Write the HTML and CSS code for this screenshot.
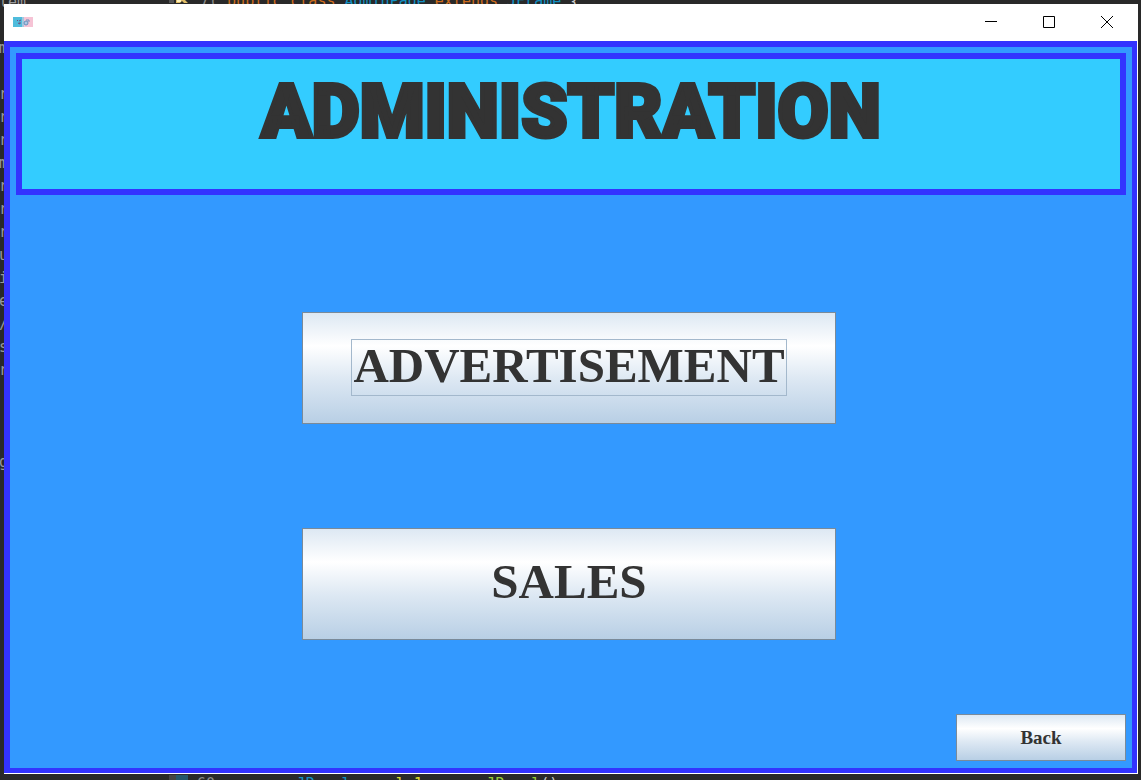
FILE: index.html
```
<!DOCTYPE html>
<html lang="en">
<head>
<meta charset="utf-8">
<title>Administration</title>
<link rel="stylesheet" href="styles.css">
</head>
<body>
<div class="editor">
  <pre class="tree"> lem

 m

 r
 r
 r
 m
 r
 re
 r
 u
 i
 e
 /
 s
 re



 g</pre>
  <pre class="code code-top"><span class="num">7(</span> <span class="kw">public</span> <span class="kw">class</span> <span class="type">AdminPage</span> <span class="kw">extends</span> <span class="type">JFrame</span> {</pre>
  <svg class="marker" width="20" height="4" viewBox="0 0 20 4" aria-hidden="true"><path fill="#555" d="M0 0h5v3H0z"/><path fill="#e0bd66" d="M7 0h9l3 3h-4l-2-2-2 2H7z"/><path fill="#fff0bb" d="M8 0h4v2H8z"/></svg>
  <div class="gutter"></div>
  <pre class="code code-bottom"><span class="num">60</span>         <span class="type">JPanel</span> <span class="var">panel_1</span> = <span class="kw">new</span> <span class="ctor">JPanel</span>();</pre>
</div>
<div class="window">
  <div class="titlebar">
    <svg class="logo" width="20" height="10" viewBox="0 0 20 10" aria-hidden="true">
      <rect width="10" height="10" fill="#4fbcdc"/><rect x="10" width="10" height="10" fill="#f6c3d5"/>
      <rect x="9" width="2" height="10" fill="#a5c8df"/>
      <path d="M4 3l1 1M6 4l2-1M5 6l2 1M7 5v2" stroke="#71507f" fill="none"/>
      <circle cx="13" cy="6" r="2" fill="#adc9e6" stroke="#678fbb"/><path d="M13 3h3v2" stroke="#678fbb" fill="none"/>
    </svg>
    <div class="controls">
      <button type="button" aria-label="Minimize"><svg width="12" height="12" viewBox="0 0 12 12"><path d="M0 5.5h12"/></svg></button>
      <button type="button" aria-label="Maximize"><svg width="12" height="12" viewBox="0 0 12 12"><path d="M.5.5h11v11H.5z"/></svg></button>
      <button type="button" aria-label="Close"><svg width="12" height="12" viewBox="0 0 12 12"><path d="M0 0l12 12M12 0L0 12"/></svg></button>
    </div>
  </div>
  <main class="content">
    <header class="banner"><h1>ADMINISTRATION</h1></header>
    <nav class="menu">
      <button type="button" class="metal large"><span class="focus">ADVERTISEMENT</span></button>
      <button type="button" class="metal large"><span>SALES</span></button>
    </nav>
    <footer class="footer"><button type="button" class="metal back">Back</button></footer>
  </main>
</div>
</body>
</html>
```
FILE: styles.css
```
* { box-sizing: border-box; }
body {
  margin: 0;
  min-height: 100vh;
  display: flex;
  padding: 4px 3px 6px 4px;
  background: #292929;
  font-family: "Liberation Sans", Arial, sans-serif;
}
.editor {
  position: absolute;
  inset: 0;
  overflow: hidden;
  color: #ccc;
}
.editor pre {
  position: absolute;
  margin: 0;
  font-family: "DejaVu Sans Mono", monospace;
  font-size: 15px;
  white-space: pre;
}
.editor .tree {
  left: -10px;
  top: -9px;
  line-height: 23px;
  color: #999;
}
.code { line-height: 18px; }
.editor .code-top { left: 200px; top: -8px; }
.editor .code-bottom { left: 197px; bottom: -13px; }
.marker { position: absolute; left: 169px; top: 0; }
.gutter {
  position: absolute;
  left: 169px;
  bottom: 0;
  width: 19px;
  height: 5px;
  border-left: 7px solid #444;
  background: #24566a;
}
.num { color: #888; }
.kw { color: #cc6c1d; }
.type { color: #1290c3; }
.var { color: #d8d82f; }
.ctor { color: #96cc38; }

.window {
  position: relative;
  flex: 1;
  display: flex;
  flex-direction: column;
  background: #fff;
  padding: 0 1px 1px 0;
}
.titlebar {
  height: 37px;
  display: flex;
  align-items: flex-start;
  justify-content: space-between;
  padding-left: 9px;
}
.logo { margin-top: 13px; }
.controls { display: flex; padding-right: 1px; }
.controls button {
  width: 58px;
  height: 36px;
  padding: 0;
  border: 0;
  background: none;
  display: flex;
  align-items: center;
  justify-content: center;
}
.controls path { fill: none; stroke: #000; stroke-width: 1; }

.content {
  flex: 1;
  display: flex;
  flex-direction: column;
  padding: 6px 6px 7px;
  border: 6px solid #33f;
  border-right-width: 5px;
  border-bottom-width: 5px;
  background: #39f;
}
.banner {
  border: 6px solid #33f;
  background: #3cf;
  padding: 8px 0 32px;
  text-align: center;
}
h1 {
  margin: 0;
  font-family: Roboto, "Liberation Sans", sans-serif;
  font-size: 74px;
  font-weight: 900;
  line-height: 90px;
  color: #333;
  -webkit-text-stroke: 4px #333;
}
.menu {
  flex: 1;
  display: flex;
  flex-direction: column;
  align-items: center;
  justify-content: center;
  gap: 104px;
  padding: 43px 4px 0 0;
}
.metal {
  border: 1px solid #7a8a99;
  border-radius: 0;
  background: linear-gradient(#dde8f3 0%, #fff 30%, #dde8f3 60%, #b8cfe5 100%);
  color: #333;
  font-family: "Liberation Serif", "Times New Roman", serif;
  font-weight: 700;
}
.large {
  width: 534px;
  max-width: 100%;
  height: 112px;
  padding: 0 0 1px;
  display: flex;
  align-items: center;
  justify-content: center;
  font-size: 49px;
  line-height: 51px;
}
.large span { border: 1px solid transparent; padding: 0 1px 4px; }
.large .focus { border-color: #a3b8cc; }
.footer { display: flex; justify-content: flex-end; }
.back { width: 170px; height: 47px; font-size: 19px; }
```
